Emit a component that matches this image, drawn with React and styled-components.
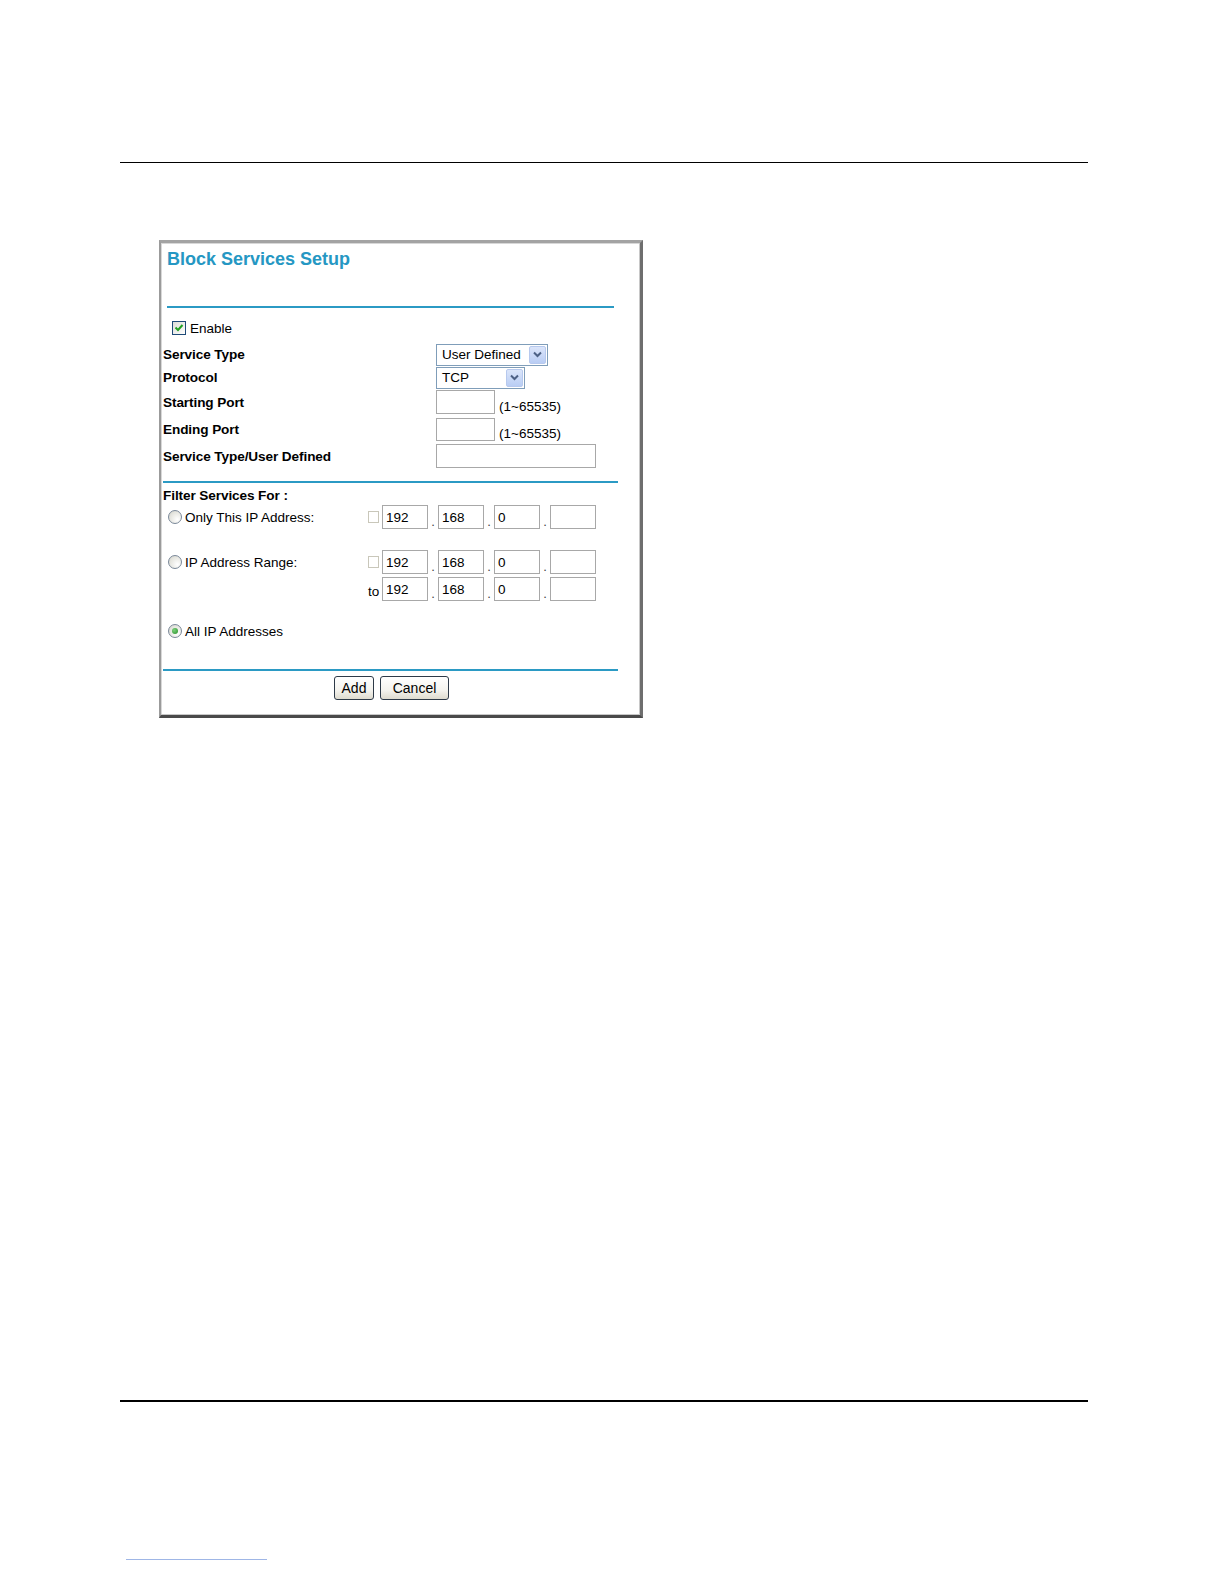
import React from "react";
import styled, { createGlobalStyle } from "styled-components";

const Global = createGlobalStyle`
  html, body { margin: 0; padding: 0; background: #fff; }
  body { font-family: "Liberation Sans", Arial, sans-serif; color: #000; }
`;

const Page = styled.div`
  width: 1224px;
  height: 1584px;
  position: relative;
  overflow: hidden;
  display: flex;
  flex-direction: column;
  align-items: flex-start;
`;

const PageRule = styled.div`
  margin-left: 120px;
  margin-top: ${(p) => p.$top}px;
  width: 968px;
  height: ${(p) => p.$thick}px;
  background: #000;
`;

const LinkLine = styled.div`
  margin-left: 126px;
  margin-top: 157px;
  width: 141px;
  height: 1px;
  background: #9fb6e6;
`;

const Frame = styled.div`
  box-sizing: border-box;
  margin-left: 159px;
  margin-top: 77px;
  width: 484px;
  height: 478px;
  background: #fff;
  border-top: 3px solid #a3a3a3;
  border-left: 2px solid #9b9b9b;
  border-right: 3px solid #6e6e6e;
  border-bottom: 3px solid #4a4a4a;
  box-shadow: inset -1px -1px 0 #c8c8c8, inset 1px 1px 0 #d8d8d8;
  display: flex;
  flex-direction: column;
  font-size: 13.5px;
`;

const Title = styled.h1`
  margin: 5px 0 0 6px;
  font-size: 18px;
  line-height: 22px;
  height: 22px;
  font-weight: bold;
  color: #2597c3;
`;

const BlueRule = styled.div`
  height: 2px;
  background: #2b9ac4;
  margin-top: ${(p) => p.$top}px;
  margin-left: ${(p) => p.$left}px;
  width: ${(p) => p.$width}px;
`;

const EnableRow = styled.label`
  display: flex;
  align-items: center;
  gap: 4px;
  height: 16px;
  margin-top: 12px;
  padding-left: 11px;
`;

const CheckBox = styled.span`
  box-sizing: border-box;
  width: 14px;
  height: 14px;
  border: 1px solid ${(p) => (p.$disabled ? "#c9c7ba" : "#1f4b78")};
  background: ${(p) =>
    p.$disabled ? "#fff" : "linear-gradient(135deg, #dcdcd6 0%, #fff 100%)"};
  display: flex;
  align-items: center;
  justify-content: center;
`;

const SmallCheck = styled(CheckBox)`
  width: 11px;
  height: 12px;
`;

const Form = styled.div`
  display: grid;
  grid-template-columns: 273px auto;
  margin-top: 7px;
  padding-left: 2px;
`;

const Label = styled.div`
  display: flex;
  align-items: center;
  height: ${(p) => p.$h}px;
  font-weight: bold;
  font-size: 13.6px;
  letter-spacing: -0.1px;
`;

const Control = styled.div`
  display: flex;
  align-items: center;
  height: ${(p) => p.$h}px;
  gap: 4px;
`;

const SelectBox = styled.div`
  box-sizing: border-box;
  width: ${(p) => p.$w}px;
  height: 22px;
  border: 1px solid #7f9db9;
  background: #fff;
  display: flex;
  align-items: center;
  justify-content: space-between;
  padding: 0 1px 0 5px;
`;

const SelectText = styled.span`
  font-size: 13.5px;
`;

const Arrow = styled.span`
  box-sizing: border-box;
  width: 17px;
  height: 18px;
  background: linear-gradient(#dbe5fa, #b9cdf4);
  border: 1px solid #b7c9ee;
  border-radius: 2px;
  display: flex;
  align-items: center;
  justify-content: center;
`;

const TextBox = styled.div`
  box-sizing: border-box;
  width: ${(p) => p.$w}px;
  height: ${(p) => p.$h || 24}px;
  border: 1px solid #a8a8a8;
  background: #fff;
  display: flex;
  align-items: center;
  padding-left: 3px;
  font-size: 13.5px;
`;

const Hint = styled.span`
  margin-top: 8px;
  font-size: 13.5px;
`;

const FilterLabel = styled.div`
  margin-top: 4px;
  padding-left: 2px;
  height: 16px;
  display: flex;
  align-items: center;
  font-weight: bold;
  font-size: 13.6px;
  letter-spacing: -0.1px;
`;

const IpGrid = styled.div`
  display: grid;
  grid-template-columns: 205px 14px auto;
  grid-auto-rows: 24px;
  row-gap: 3px;
  padding-left: 2px;
  margin-top: ${(p) => p.$top}px;
`;

const RadioLabel = styled.div`
  display: flex;
  align-items: center;
  gap: 3px;
  padding-left: 5px;
  height: ${(p) => p.$h || 24}px;
  font-size: 13.5px;
`;

const Radio = styled.span`
  box-sizing: border-box;
  width: 14px;
  height: 14px;
  border-radius: 50%;
  border: 1px solid #7a8899;
  background: radial-gradient(circle at 70% 70%, #fff 0%, #e6e6e0 60%, #d0d0c8 100%);
  display: flex;
  align-items: center;
  justify-content: center;
`;

const RadioDot = styled.span`
  width: 6px;
  height: 6px;
  border-radius: 50%;
  background: radial-gradient(circle at 35% 35%, #7ad07a, #2a8f2a);
`;

const Prefix = styled.div`
  display: flex;
  align-items: ${(p) => (p.$bottom ? "flex-end" : "center")};
  padding-bottom: ${(p) => (p.$bottom ? 2 : 0)}px;
  font-size: 13.5px;
`;

const IpFields = styled.div`
  display: flex;
  align-items: stretch;
`;

const Dot = styled.span`
  width: 10px;
  display: flex;
  align-items: flex-end;
  justify-content: center;
  font-size: 13px;
  color: #444;
  line-height: 14px;
`;

const Spacer = styled.div``;

const AllRow = styled(RadioLabel)`
  margin-top: 22px;
  padding-left: 7px;
`;

const Buttons = styled.div`
  margin-top: 5px;
  width: 457px;
  padding-left: 2px;
  display: flex;
  justify-content: center;
  gap: 6px;
`;

const Button = styled.button`
  box-sizing: border-box;
  height: 24px;
  width: ${(p) => p.$w}px;
  padding: 0;
  font-family: "Liberation Sans", Arial, sans-serif;
  font-size: 14px;
  color: #000;
  border: 1px solid #2e3a48;
  border-radius: 3px;
  background: linear-gradient(#ffffff 0%, #f4f3ee 60%, #dedbcf 100%);
`;

const Chevron = () => (
  <svg width="9" height="7" viewBox="0 0 9 7">
    <path d="M1 1.5 L4.5 5 L8 1.5" fill="none" stroke="#4d6185" strokeWidth="2" />
  </svg>
);

const Tick = () => (
  <svg width="10" height="10" viewBox="0 0 10 10">
    <path d="M1.5 4.5 L4 7 L8.5 2" fill="none" stroke="#21a121" strokeWidth="2" />
  </svg>
);

const Ip = ({ parts }) => (
  <IpFields>
    {parts.map((v, i) => (
      <React.Fragment key={i}>
        {i > 0 && <Dot>.</Dot>}
        <TextBox $w={46}>{v}</TextBox>
      </React.Fragment>
    ))}
  </IpFields>
);

export default function App() {
  return (
    <>
      <Global />
      <Page>
        <PageRule $top={162} $thick={1} />
        <Frame>
          <Title>Block Services Setup</Title>
          <BlueRule $top={36} $left={6} $width={447} />
          <EnableRow>
            <CheckBox>
              <Tick />
            </CheckBox>
            Enable
          </EnableRow>
          <Form>
            <Label $h={23}>Service Type</Label>
            <Control $h={23}>
              <SelectBox $w={112}>
                <SelectText>User Defined</SelectText>
                <Arrow>
                  <Chevron />
                </Arrow>
              </SelectBox>
            </Control>
            <Label $h={23}>Protocol</Label>
            <Control $h={23}>
              <SelectBox $w={89}>
                <SelectText>TCP</SelectText>
                <Arrow>
                  <Chevron />
                </Arrow>
              </SelectBox>
            </Control>
            <Label $h={26}>Starting Port</Label>
            <Control $h={26}>
              <TextBox $w={59} />
              <Hint>(1~65535)</Hint>
            </Control>
            <Label $h={28}>Ending Port</Label>
            <Control $h={28}>
              <TextBox $w={59} $h={23} />
              <Hint>(1~65535)</Hint>
            </Control>
            <Label $h={26}>Service Type/User Defined</Label>
            <Control $h={26}>
              <TextBox $w={160} />
            </Control>
          </Form>
          <BlueRule $top={12} $left={2} $width={455} />
          <FilterLabel>Filter Services For :</FilterLabel>
          <IpGrid $top={2}>
            <RadioLabel>
              <Radio />
              Only This IP Address:
            </RadioLabel>
            <Prefix>
              <SmallCheck $disabled />
            </Prefix>
            <Ip parts={["192", "168", "0", ""]} />
          </IpGrid>
          <IpGrid $top={21}>
            <RadioLabel>
              <Radio />
              IP Address Range:
            </RadioLabel>
            <Prefix>
              <SmallCheck $disabled />
            </Prefix>
            <Ip parts={["192", "168", "0", ""]} />
            <Spacer />
            <Prefix $bottom>to</Prefix>
            <Ip parts={["192", "168", "0", ""]} />
          </IpGrid>
          <AllRow $h={16}>
            <Radio>
              <RadioDot />
            </Radio>
            All IP Addresses
          </AllRow>
          <BlueRule $top={30} $left={2} $width={455} />
          <Buttons>
            <Button $w={40}>Add</Button>
            <Button $w={69}>Cancel</Button>
          </Buttons>
        </Frame>
        <PageRule $top={682} $thick={2} />
        <LinkLine />
      </Page>
    </>
  );
}
